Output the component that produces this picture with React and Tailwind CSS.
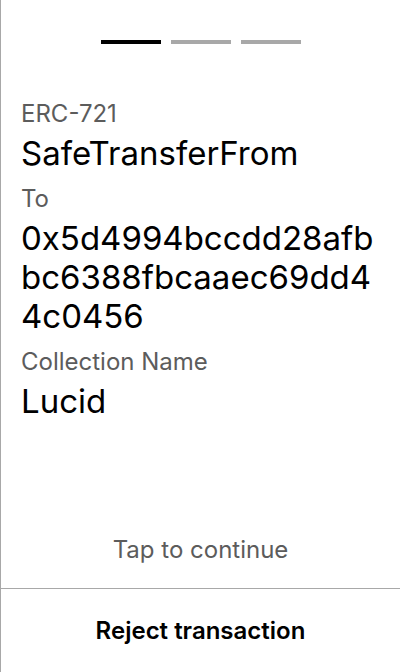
const fields = [
  { label: "ERC-721", value: "SafeTransferFrom" },
  { label: "To", value: "0x5d4994bccdd28afbbc6388fbcaaec69dd44c0456" },
  { label: "Collection Name", value: "Lucid" },
];

const App = () => {
  return (
    <div
      className="h-[672px] w-[400px] bg-white border-l border-[#a8a8a8] flex flex-col"
      style={{ fontFamily: "Inter, 'Noto Sans', sans-serif" }}
    >
      {/* Step indicator */}
      <div className="flex justify-center gap-[10px] pt-[40px]">
        <div className="h-[4px] w-[60px] bg-black" />
        <div className="h-[4px] w-[60px] bg-[#a8a8a8]" />
        <div className="h-[4px] w-[60px] bg-[#a8a8a8]" />
      </div>

      {/* Details */}
      <div className="flex-1 px-5 pt-[54px]">
        {fields.map((f, i) => (
          <div key={f.label} className={i === 0 ? "" : "mt-[10px]"}>
            <p className="text-[24px] leading-[32px] text-[#5c5c5c]">
              {f.label}
            </p>
            <p className="mt-[4px] text-[33px] leading-[39px] text-black break-all">
              {f.value}
            </p>
          </div>
        ))}
      </div>

      <p className="text-center text-[24px] leading-[32px] text-[#5c5c5c] pb-[22px]">
        Tap to continue
      </p>

      {/* Reject */}
      <button className="h-[84px] border-t border-[#a8a8a8] text-[24px] font-semibold text-black">
        Reject transaction
      </button>
    </div>
  );
};

export default App;
